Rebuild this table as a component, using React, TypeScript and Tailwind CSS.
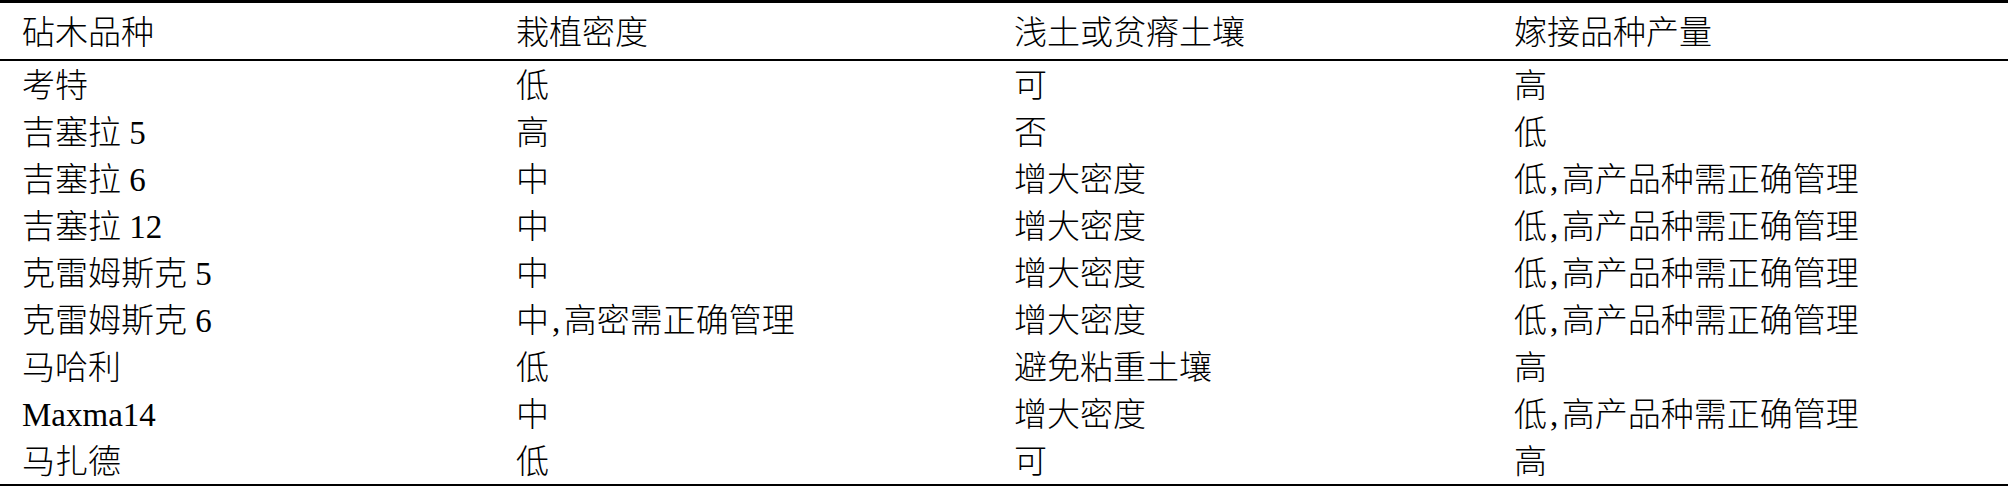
import React from "react";

const header = ["砧木品种", "栽植密度", "浅土或贫瘠土壤", "嫁接品种产量"];
const rows: string[][] = [
  ["考特", "低", "可", "高"],
  ["吉塞拉 5", "高", "否", "低"],
  ["吉塞拉 6", "中", "增大密度", "低,高产品种需正确管理"],
  ["吉塞拉 12", "中", "增大密度", "低,高产品种需正确管理"],
  ["克雷姆斯克 5", "中", "增大密度", "低,高产品种需正确管理"],
  ["克雷姆斯克 6", "中,高密需正确管理", "增大密度", "低,高产品种需正确管理"],
  ["马哈利", "低", "避免粘重土壤", "高"],
  ["Maxma14", "中", "增大密度", "低,高产品种需正确管理"],
  ["马扎德", "低", "可", "高"],
];

const cols = "grid grid-cols-[494px_498px_500px_516px]";

function Cell({ text }: { text: string }) {
  const parts = text.split(",");
  return (
    <div className="pl-[22px] whitespace-nowrap">
      {parts.map((p, i) => (
        <React.Fragment key={i}>
          {i > 0 && <span className="inline-block w-[0.45em] text-left pl-[3px]">,</span>}
          {p}
        </React.Fragment>
      ))}
    </div>
  );
}

export default function App() {
  return (
    <div
      className="w-[2008px] h-[486px] bg-white text-black text-[33px] leading-none font-light"
      style={{ fontFamily: '"Liberation Serif", "Noto Sans CJK SC", serif' }}
    >
      <div className="border-t-[3px] border-b-2 border-black">
        <div className={`${cols} h-[56px] items-center pt-[4px]`}>
          {header.map((h, i) => (
            <Cell key={i} text={h} />
          ))}
        </div>
        <div className="border-t-2 border-black">
          {rows.map((r, ri) => (
            <div key={ri} className={`${cols} h-[47px] items-center pt-[3px]`}>
              {r.map((c, ci) => (
                <Cell key={ci} text={c} />
              ))}
            </div>
          ))}
        </div>
      </div>
    </div>
  );
}
